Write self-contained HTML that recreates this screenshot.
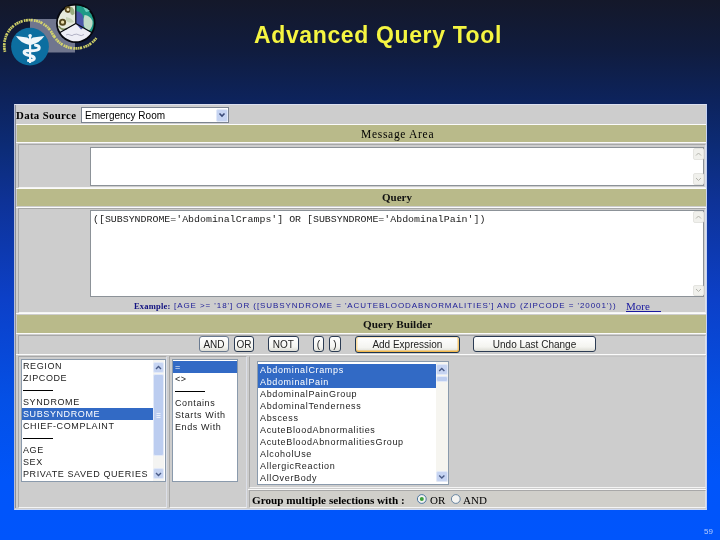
<!DOCTYPE html>
<html><head><meta charset="utf-8">
<style>
*{margin:0;padding:0;box-sizing:border-box}
.t,.list,.btn{will-change:transform}
html,body{width:720px;height:540px;overflow:hidden}
body{position:relative;font-family:"Liberation Sans",sans-serif;
background:linear-gradient(to bottom,rgb(20,24,42) 0px,rgb(16,28,62) 50px,rgb(13,35,92) 100px,rgb(12,44,120) 150px,rgb(14,50,150) 200px,rgb(12,64,200) 300px,rgb(4,80,230) 400px,rgb(0,85,250) 480px,rgb(0,85,252) 540px);}
.a{position:absolute}
.t{position:absolute;white-space:nowrap;line-height:1}
.serif{font-family:"Liberation Serif",serif}
.mono{font-family:"Liberation Mono",monospace}
.olive{position:absolute;background:#b9ba8a}
.hl{position:absolute;background:#fbfbfb;height:1px}
.cell{position:absolute;border-top:1px solid #a8a8a8;border-left:1px solid #a8a8a8;border-bottom:1px solid #f4f4f4;border-right:1px solid #dcdfe8}
.btn{position:absolute;border:1px solid #2c3c54;border-radius:3px;background:linear-gradient(#ffffff,#f4f4f0 70%,#dcdcd4);font-size:10px;text-align:center;color:#222;padding-top:1px}
.list{position:absolute;background:#fff;border:1px solid #8a9aac;overflow:hidden;font-size:9px;letter-spacing:0.6px;color:#222}
.list div{height:12px;line-height:12px;padding-left:2px;white-space:nowrap}
.sel{background:#326ac5;color:#fff}
.l1 div{padding-left:1px;width:132px}
.sep{display:inline-block;width:30px;height:1px;background:#000;vertical-align:top;margin-top:6px}
.sb{position:absolute;background:#eef0f6}
.arr{position:absolute;background:#c6d4f2;border:1px solid #e2e9f8;border-radius:2px}
</style></head><body>

<!-- LOGO -->
<svg class="a" style="left:0;top:0" width="110" height="72" viewBox="0 0 110 72">
  <rect x="30" y="19" width="45" height="33.5" fill="#70768e"/>
  <circle cx="30" cy="46.6" r="18.9" fill="#0c6ea0"/>
  <path d="M5.06 51.9 A25.5 25.5 0 0 1 53.6 36.5 L54.1 36.2 A25.3 25.3 0 0 0 96.5 37.7" fill="none" stroke="#dcdc6a" stroke-width="2.7" stroke-dasharray="1.6 0.5 2 0.6 1.4 0.5 2.2 1.3" opacity="0.92"/>
  <g fill="#f0f6fa">
    <circle cx="30.1" cy="35.7" r="1.8"/>
    <path d="M16 36.1 L27.2 37.4 Q29.2 38 29.6 40.5 L29.6 44.9 Q21 43.8 16 36.1Z"/>
    <path d="M44.3 36.1 L33 37.4 Q31 38 30.6 40.5 L30.6 44.9 Q39.2 43.8 44.3 36.1Z"/>
    <rect x="29" y="37" width="2.2" height="26"/>
  </g>
  <path d="M35.5 45.2 Q40 45.6 39 48.8 Q37.8 50.8 31 50.8 L26.5 50.6 Q23.5 51 24.3 53 Q25.5 55 31.5 56 Q35.2 57.2 34 59.2 Q32.5 60.8 28.5 60.5" fill="none" stroke="#f0f6fa" stroke-width="3.1" stroke-linecap="round"/>
  <g>
    <circle cx="75.8" cy="23.2" r="19.8" fill="#06080e"/>
    <path d="M75.8 23.4 L75.8 5.4 A17.9 17.9 0 0 0 60.3 32.3Z" fill="#e6eadc"/>
    <path d="M75.8 23.4 L75.8 5.4 A17.9 17.9 0 0 1 91.3 32.3Z" fill="#1e9a86"/>
    <path d="M75.8 23.4 L60.3 32.3 A17.9 17.9 0 0 0 91.3 32.3Z" fill="#eeeef6"/>
    <path d="M76 11 Q80 11.5 82.5 15 Q84.5 20 84 25 Q83 29 81 29.5 L76 23.5Z" fill="#4c58a8"/>
    <path d="M84.5 15 Q90 15.5 92.5 21 Q93.2 27 89 30.5 Q84 29.5 83.6 24 Q83 19 84.5 15Z" fill="#c0dcc8"/>
    <path d="M83 7 Q87 8 90 11 L86 12Z" fill="#70d0c0"/>
    <circle cx="68" cy="9.6" r="2.4" fill="#f0e8c0" stroke="#5a4a1e" stroke-width="1.8"/>
    <circle cx="62.6" cy="22.2" r="2.6" fill="#e8dcaa" stroke="#54481e" stroke-width="1.9"/>
    <path d="M70.5 6.5 Q75 8 74.5 14 Q71 17 70 12Z" fill="#9aae80"/>
    <path d="M66 17 Q72 18 74 22 Q70 24 66 21Z" fill="#c8d4b8"/>
    <path d="M58.5 26 Q62 31 67 28.5" fill="none" stroke="#7a8a5a" stroke-width="1.4"/>
    <path d="M66 35 Q68 33.5 70 35 T74 34.5 Q77 33.5 79 35 T84 34.5" fill="none" stroke="#8a8aa4" stroke-width="0.6"/>
    <path d="M75.8 23.4 L75.8 4.5 M75.8 23.4 L59.5 32.8 M75.8 23.4 L92.1 32.8" stroke="#06080e" stroke-width="1.2"/>
  </g>
</svg>

<!-- TITLE -->
<div class="t" style="left:254px;top:23.5px;font-size:23px;letter-spacing:0.63px;font-weight:bold;color:#f5f541">Advanced Query Tool</div>

<!-- PANEL -->
<div class="a" style="left:14px;top:104px;width:693px;height:405.8px;background:#cdcdcd;border-left:1.4px solid #b6bed8;border-top:1.1px solid #dce0f0;border-right:1.3px solid #c4d2f4;border-bottom:1.8px solid #cad8f6"></div>
<div class="a" style="left:15.4px;top:105px;width:0.9px;height:403px;background:#8c9098"></div>

<!-- Data Source row -->
<div class="t serif" style="left:16.3px;top:110.3px;font-size:10.8px;letter-spacing:0.35px;font-weight:bold;color:#000">Data Source</div>
<div class="a" style="left:81px;top:107px;width:148px;height:15.6px;background:#fff;border:1px solid #7c8490"></div>
<div class="t" style="left:85px;top:111px;font-size:10px;color:#000">Emergency Room</div>
<div class="arr" style="left:216px;top:108.5px;width:11.5px;height:13px"></div>
<svg class="a" style="left:218px;top:111px" width="8" height="8"><path d="M1.5 2.5 L4 5 L6.5 2.5" fill="none" stroke="#3a4a78" stroke-width="1.6"/></svg>

<div class="hl" style="left:16px;top:123.5px;width:690px"></div>

<!-- Message Area header -->
<div class="olive" style="left:17.3px;top:125px;width:688.7px;height:17px"></div>
<div class="t serif" style="left:360.5px;top:128.5px;font-size:11.5px;letter-spacing:0.7px;color:#000">Message Area</div>
<div class="hl" style="left:16px;top:142px;width:690px"></div>

<!-- Message cell -->
<div class="cell" style="left:17.5px;top:143.5px;width:688.5px;height:44px"></div>
<div class="a" style="left:89.8px;top:146.5px;width:614.7px;height:39.2px;background:#fff;border:1px solid #8c9298"></div>
<div class="arr" style="left:693px;top:148px;width:11px;height:11.5px;background:#f0f0ec;border-color:#e4e4e0"></div>
<div class="arr" style="left:693px;top:173px;width:11px;height:11.5px;background:#f0f0ec;border-color:#e4e4e0"></div>
<svg class="a" style="left:694px;top:149px" width="9" height="36"><path d="M2 6.5 L4.5 4 L7 6.5 M2 29 L4.5 31.5 L7 29" fill="none" stroke="#b4b4ac" stroke-width="1"/></svg>

<div class="hl" style="left:16px;top:187.5px;width:690px"></div>

<!-- Query header -->
<div class="olive" style="left:17.3px;top:189px;width:688.7px;height:17px"></div>
<div class="t serif" style="left:382px;top:191.8px;font-size:11px;font-weight:bold;color:#111">Query</div>
<div class="hl" style="left:16px;top:206.5px;width:690px"></div>

<!-- Query cell -->
<div class="cell" style="left:17.5px;top:208px;width:688.5px;height:105px"></div>
<div class="a" style="left:89.8px;top:209.8px;width:614.7px;height:87.4px;background:#fff;border:1px solid #8c9298"></div>
<div class="t mono" style="left:93.4px;top:214.5px;font-size:9.92px;color:#222">([SUBSYNDROME='AbdominalCramps'] OR [SUBSYNDROME='AbdominalPain'])</div>
<div class="arr" style="left:693px;top:211px;width:11px;height:11.5px;background:#f0f0ec;border-color:#e4e4e0"></div>
<div class="arr" style="left:693px;top:284.5px;width:11px;height:11.5px;background:#f0f0ec;border-color:#e4e4e0"></div>
<svg class="a" style="left:694px;top:212px" width="9" height="84"><path d="M2 6.5 L4.5 4 L7 6.5 M2 77 L4.5 79.5 L7 77" fill="none" stroke="#b4b4ac" stroke-width="1"/></svg>

<div class="t serif" style="left:133.6px;top:301.5px;font-size:8.5px;font-weight:bold;color:#101080;letter-spacing:0.2px">Example:</div>
<div class="t" style="left:173.5px;top:302px;font-size:8px;color:#1a1a96;letter-spacing:0.93px">[AGE &gt;= '18'] OR ([SUBSYNDROME = 'ACUTEBLOODABNORMALITIES'] AND (ZIPCODE = '20001'))</div>
<div class="t serif" style="left:626px;top:300.5px;font-size:11px;color:#1a1aa0">More</div>
<div class="a" style="left:626px;top:310.5px;width:35px;height:1px;background:#1a1aa0"></div>

<div class="hl" style="left:16px;top:313px;width:690px"></div>

<!-- Query Builder header -->
<div class="olive" style="left:17.3px;top:314.5px;width:688.7px;height:18px"></div>
<div class="t serif" style="left:363px;top:319px;font-size:11.2px;font-weight:bold;color:#111">Query Builder</div>
<div class="hl" style="left:16px;top:333px;width:690px"></div>

<!-- buttons row -->
<div class="cell" style="left:17.5px;top:334.5px;width:688.5px;height:20.5px"></div>
<div class="btn" style="left:199px;top:336.3px;width:30px;height:16.4px;line-height:14.4px;border-color:#6a7a90">AND</div>
<div class="btn" style="left:234.4px;top:336.3px;width:20px;height:16.4px;line-height:14.4px">OR</div>
<div class="btn" style="left:268.2px;top:336.3px;width:30.8px;height:16.4px;line-height:14.4px">NOT</div>
<div class="btn" style="left:313.3px;top:336.3px;width:11px;height:16.4px;line-height:14.4px">(</div>
<div class="btn" style="left:329.3px;top:336.3px;width:11.8px;height:16.4px;line-height:14.4px">)</div>
<div class="btn" style="left:354.6px;top:335.8px;width:104.8px;height:16.6px;line-height:14.6px;border-color:#1c3450;box-shadow:inset 0 -1.5px 0 #f2b84c,inset 1.5px 0 0 #fbdca0,inset 0 1px 0 #fde9c4,inset -1.5px 0 0 #f6c872">Add Expression</div>
<div class="btn" style="left:473.3px;top:336.3px;width:123px;height:16.4px;line-height:14.4px">Undo Last Change</div>

<div class="hl" style="left:16px;top:354.2px;width:690px"></div>

<!-- lists row -->
<div class="cell" style="left:17.5px;top:356px;width:149px;height:152px"></div>
<div class="cell" style="left:168.5px;top:356px;width:78px;height:152px"></div>
<div class="cell" style="left:248.5px;top:356px;width:457.5px;height:131.5px;border-top-color:#c4c4c4;border-right-color:#d8dce8"></div>
<div class="hl" style="left:248px;top:488.5px;width:458px"></div>
<div class="cell" style="left:248.5px;top:489.5px;width:457.5px;height:18px;background:#d0cfca"></div>

<div class="list l1" style="left:20.5px;top:359px;width:144.5px;height:122.5px">
 <div style="margin-top:0px">REGION</div>
 <div>ZIPCODE</div>
 <div><span class="sep"></span></div>
 <div>SYNDROME</div>
 <div class="sel">SUBSYNDROME</div>
 <div>CHIEF-COMPLAINT</div>
 <div><span class="sep"></span></div>
 <div>AGE</div>
 <div>SEX</div>
 <div>PRIVATE SAVED QUERIES</div>
</div>
<!-- list1 scrollbar -->
<div class="sb" style="left:153.3px;top:360px;width:11px;height:120.5px;background:#f4f4f2"></div>
<div class="arr" style="left:153.3px;top:362px;width:11px;height:11px"></div>
<div class="arr" style="left:153.3px;top:374.3px;width:11px;height:82px;background:#bccdf0"></div>
<div class="arr" style="left:153.3px;top:468.3px;width:11px;height:11px"></div>
<svg class="a" style="left:153.3px;top:362px" width="11" height="118"><path d="M3 7 L5.5 4.5 L8 7 M3 111 L5.5 113.5 L8 111" fill="none" stroke="#4a5c88" stroke-width="1.4"/><path d="M3.5 51.5 H7.5 M3.5 53.5 H7.5 M3.5 55.5 H7.5" stroke="#eef3fc" stroke-width="0.9"/></svg>

<div class="list" style="left:172.4px;top:359px;width:66px;height:123px">
 <div class="sel" style="margin-top:1px">=</div>
 <div>&lt;&gt;</div>
 <div><span class="sep"></span></div>
 <div>Contains</div>
 <div>Starts With</div>
 <div>Ends With</div>
</div>

<div class="list" style="left:257px;top:360.8px;width:192px;height:123.5px;letter-spacing:0.65px">
 <div class="sel" style="margin-top:1.5px">AbdominalCramps</div>
 <div class="sel">AbdominalPain</div>
 <div>AbdominalPainGroup</div>
 <div>AbdominalTenderness</div>
 <div>Abscess</div>
 <div>AcuteBloodAbnormalities</div>
 <div>AcuteBloodAbnormalitiesGroup</div>
 <div>AlcoholUse</div>
 <div>AllergicReaction</div>
 <div>AllOverBody</div>
</div>
<div class="sb" style="left:435.5px;top:361.8px;width:12.5px;height:120.5px;background:#f6f5f0"></div>
<div class="arr" style="left:436px;top:364.2px;width:11.5px;height:10.5px"></div>
<div class="arr" style="left:436px;top:376px;width:11.5px;height:6px;background:#bccdf0"></div>
<div class="arr" style="left:436px;top:471.3px;width:11.5px;height:10.5px"></div>
<svg class="a" style="left:436px;top:364px" width="12" height="118"><path d="M3.2 7 L5.8 4.5 L8.4 7 M3.2 111.5 L5.8 114 L8.4 111.5" fill="none" stroke="#4a5c88" stroke-width="1.4"/></svg>

<div class="t serif" style="left:252px;top:495px;font-size:11.2px;font-weight:bold;color:#000">Group multiple selections with :</div>
<svg class="a" style="left:416px;top:494px" width="50" height="12">
 <circle cx="5.8" cy="5" r="4.4" fill="#f4f4f2" stroke="#3a6a9a" stroke-width="0.9"/>
 <circle cx="5.8" cy="5" r="2" fill="#3ca03c"/>
 <circle cx="39.8" cy="5" r="4.4" fill="#f4f4f2" stroke="#5a7a9a" stroke-width="0.9"/>
</svg>
<div class="t serif" style="left:429.5px;top:495px;font-size:11px;color:#000">OR</div>
<div class="t serif" style="left:462.5px;top:495px;font-size:11px;color:#000">AND</div>

<div class="t" style="left:704px;top:528px;font-size:8px;color:#b6cdfb">59</div>
</body></html>
